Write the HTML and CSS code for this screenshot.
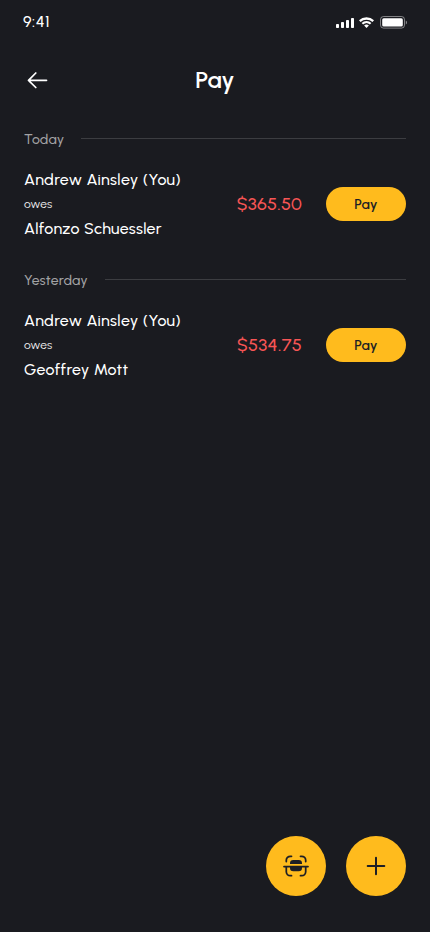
FILE: index.html
```html
<!DOCTYPE html>
<html lang="en">
<head>
<meta charset="utf-8">
<meta name="viewport" content="width=device-width, initial-scale=1">
<title>Pay</title>
<link rel="stylesheet" href="styles.css">
</head>
<body>
<div class="screen">
  <div class="status">
    <span class="time">9:41</span>
    <svg class="status-icons" width="72" height="16" viewBox="0 0 72 16" fill="#fff">
      <rect x="1" y="10" width="3" height="4" rx=".8"/>
      <rect x="6" y="8" width="3" height="6" rx=".8"/>
      <rect x="11" y="6" width="3" height="8" rx=".8"/>
      <rect x="16" y="4" width="3" height="10" rx=".8"/>
      <path d="M24 6.7a11 11 0 0 1 15 0l-1.500 1.700a8.800 8.800 0 0 0-12 0zM26.600 9.400a7.200 7.200 0 0 1 9.800 0l-1.500 1.600a5 5 0 0 0-6.800 0zM29.100 12a3.600 3.600 0 0 1 4.800 0l-2.400 2.400z" transform="translate(0 -.4)"/>
      <rect x="45.500" y="2.500" width="24" height="11.600" rx="3" fill="none" stroke="#fff" stroke-opacity=".45"/>
      <rect x="47.200" y="4.200" width="20.600" height="8.400" rx="1.500"/>
      <path d="M70.800 6.400q1.200.5 1.200 2t-1.200 2z" fill-opacity=".5"/>
    </svg>
  </div>
  <header class="header">
    <svg class="back" width="28" height="28" viewBox="0 0 28 28" fill="none" stroke="#fff" stroke-width="1.75" stroke-linecap="round" stroke-linejoin="round">
      <path d="M22.500 14.300H4.500M11.800 7L4.500 14.300l7.300 7.200"/>
    </svg>
    <h1 class="title">Pay</h1>
  </header>
  <main class="content">
    <section class="group">
      <div class="day"><h2 class="day-name">Today</h2><span class="rule"></span></div>
      <div class="row">
        <div class="people">
          <span class="name debtor">Andrew Ainsley (You)</span>
          <span class="owes">owes</span>
          <span class="name">Alfonzo Schuessler</span>
        </div>
        <span class="amount">$365.50</span>
        <button class="pay" type="button">Pay</button>
      </div>
    </section>
    <section class="group">
      <div class="day"><h2 class="day-name">Yesterday</h2><span class="rule"></span></div>
      <div class="row">
        <div class="people">
          <span class="name debtor">Andrew Ainsley (You)</span>
          <span class="owes">owes</span>
          <span class="name">Geoffrey Mott</span>
        </div>
        <span class="amount">$534.75</span>
        <button class="pay" type="button">Pay</button>
      </div>
    </section>
  </main>
  <footer class="actions">
    <button class="fab" type="button" aria-label="Scan">
      <svg width="28" height="28" viewBox="0 0 28 28" fill="none" stroke="#1e1f25" stroke-width="1.750" stroke-linecap="round">
        <path d="M2 14.600h24M4.300 9.500V8.300a4 4 0 0 1 4-4H9.500M18.500 4.300h1.200a4 4 0 0 1 4 4V9.500M4.300 14.800v4.900a4 4 0 0 0 4 4H9.500M18.500 23.700h1.200a4 4 0 0 0 4-4v-4.900"/>
        <path d="M8 12v-.7a3.300 3.300 0 0 1 3.300-3.300h5.400a3.300 3.300 0 0 1 3.300 3.300v.7zM8 14.900h12v1a3.300 3.300 0 0 1-3.300 3.300h-5.400a3.300 3.300 0 0 1-3.300-3.300z" fill="#1e1f25" stroke="none"/>
      </svg>
    </button>
    <button class="fab" type="button" aria-label="Add">
      <svg width="28" height="28" viewBox="0 0 28 28" fill="none" stroke="#1e1f25" stroke-width="2" stroke-linecap="round">
        <path d="M14 5.700v16.600M5.700 14h16.600"/>
      </svg>
    </button>
  </footer>
</div>
</body>
</html>
```
FILE: styles.css
```css
* { box-sizing: border-box; }
body {
  margin: 0;
  background: #1a1b20;
  color: #fff;
  font-family: Urbanist, Lato, sans-serif;
}
.screen {
  height: 932px;
  display: flex;
  flex-direction: column;
}
.status {
  height: 44px;
  padding: 0 23px;
  display: flex;
  align-items: center;
  justify-content: space-between;
}
.time { font-size: 16px; font-weight: 550; letter-spacing: .55px; margin-bottom: 2px; }
.header {
  height: 72px;
  padding: 0 24px;
  display: grid;
  grid-template-columns: 28px 1fr 28px;
  align-items: center;
}
.title {
  margin: 0;
  text-align: center;
  font-size: 24px;
  font-weight: 650;
  line-height: 32px;
  letter-spacing: .1px;
}
.back { display: block; }
.content { flex: 1; padding: 12px 24px 0; }
.group { height: 141px; }
.day { display: flex; align-items: center; height: 22px; gap: 17px; }
.day-name {
  margin: 0;
  padding-top: 2px;
  font-size: 14px;
  font-weight: 500;
  line-height: 22px;
  letter-spacing: .2px;
  color: #a2a2a4;
}
.rule { flex: 1; height: 1px; margin-bottom: 1px; background: #3c3d41; }
.row { height: 74px; margin-top: 17px; display: flex; align-items: center; }
.people { flex: 1; display: flex; flex-direction: column; white-space: nowrap; }
.name { font-size: 16px; font-weight: 550; line-height: 25px; letter-spacing: .27px; }
.debtor { letter-spacing: .37px; }
.owes { font-size: 12px; line-height: 24px; letter-spacing: .2px; color: #f0f0f0; }
.amount {
  font-size: 18px;
  font-weight: 550;
  letter-spacing: .3px;
  color: #f75555;
  margin-right: 24px;
}
.pay {
  width: 80px;
  height: 34px;
  border: 0;
  padding: 0;
  margin: 0;
  border-radius: 17px;
  background: #ffbb1d;
  color: #1e1f25;
  font: 600 14px Urbanist, Lato, sans-serif;
  letter-spacing: .2px;
}
.actions {
  display: flex;
  justify-content: flex-end;
  gap: 20px;
  padding: 0 24px 36px;
}
.fab {
  width: 60px;
  height: 60px;
  border: 0;
  padding: 0;
  border-radius: 50%;
  background: #ffbb1d;
  display: flex;
  align-items: center;
  justify-content: center;
}
```
